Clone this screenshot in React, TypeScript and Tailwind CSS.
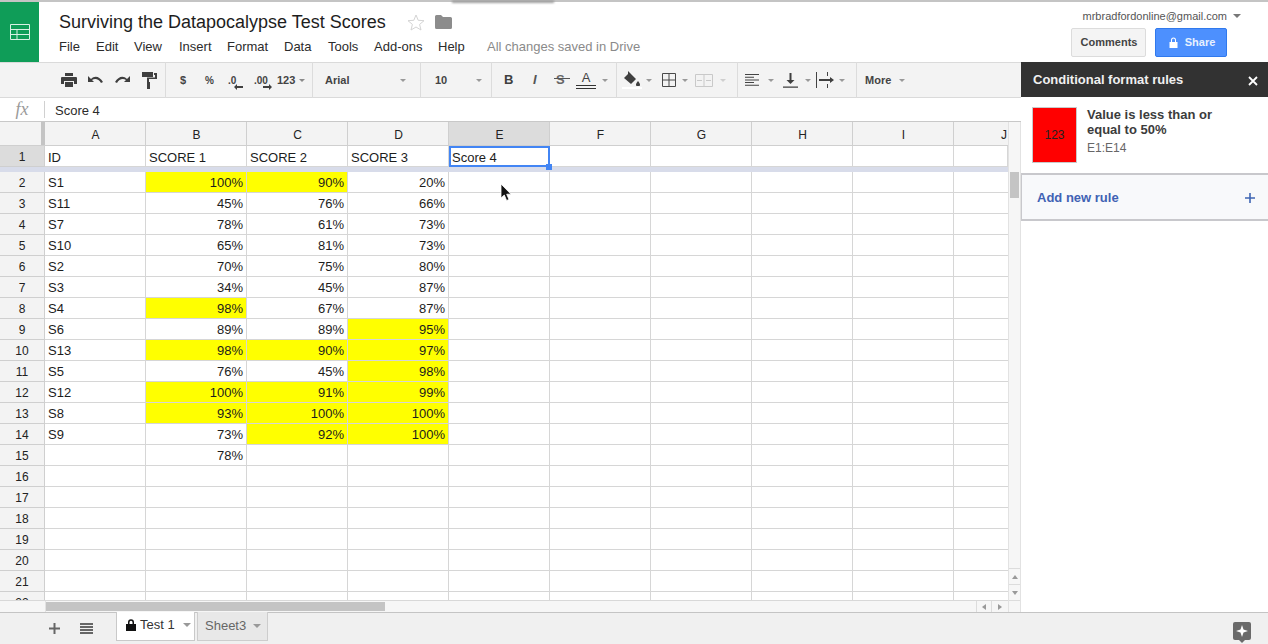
import React from "react";

const cols = ["A", "B", "C", "D", "E", "F", "G", "H", "I", "J"];
type Cell = [string, boolean?];
const rows: [string, Cell, Cell, Cell][] = [
  ["S1", ["100%", true], ["90%", true], ["20%"]],
  ["S11", ["45%"], ["76%"], ["66%"]],
  ["S7", ["78%"], ["61%"], ["73%"]],
  ["S10", ["65%"], ["81%"], ["73%"]],
  ["S2", ["70%"], ["75%"], ["80%"]],
  ["S3", ["34%"], ["45%"], ["87%"]],
  ["S4", ["98%", true], ["67%"], ["87%"]],
  ["S6", ["89%"], ["89%"], ["95%", true]],
  ["S13", ["98%", true], ["90%", true], ["97%", true]],
  ["S5", ["76%"], ["45%"], ["98%", true]],
  ["S12", ["100%", true], ["91%", true], ["99%", true]],
  ["S8", ["93%", true], ["100%", true], ["100%", true]],
  ["S9", ["73%"], ["92%", true], ["100%", true]],
  ["", ["78%"], [""], [""]],
];

function Caret({ c = "#8a8a8a", s = 3 }: { c?: string; s?: number }) {
  return <svg width={s * 2} height={s} viewBox="0 0 6 3" className="shrink-0"><path d="M0 0h6L3 3z" fill={c} /></svg>;
}
function Sep() {
  return <div className="h-[36px] w-px shrink-0 bg-[#dcdcdc]" />;
}

function RowHead({ n, active }: { n: number; active?: boolean }) {
  return (
    <div className={`h-[21px] w-[45px] shrink-0 flex items-center justify-center pt-[2px] border-r border-b border-[#cfcfcf] text-[12px] text-[#222] ${active ? "bg-[#dcdcdc]" : "bg-[#f3f3f3]"}`}>
      {n}
    </div>
  );
}

function DataCell({ v, right, hl, first, w = "w-[101px]" }: { v?: string; right?: boolean; hl?: boolean; first?: boolean; w?: string }) {
  return (
    <div className={`${w} h-full shrink-0 border-r border-b border-[#d6d6d6] px-[3px] flex items-center text-[13px] leading-none text-[#1c1c1c] ${first ? "pt-[2px]" : ""} ${right ? "justify-end" : ""} ${hl ? "bg-[#ffff00]" : "bg-white"}`}>
      {v}
    </div>
  );
}

function EmptyCols() {
  return (
    <>
      <DataCell />
      <DataCell />
      <DataCell />
      <DataCell />
      <DataCell />
      <DataCell />
      <DataCell w="w-[54px]" />
    </>
  );
}

function Toolbar() {
  const g = "#3f3f3f";
  return (
    <div className="h-[36px] shrink-0 flex items-center bg-[#f3f3f3] border-y border-[#dadada] text-[11px] font-bold text-[#444]">
      <div className="w-[165px] shrink-0 flex items-center pl-[61px] gap-[10px]">
        <svg width="16" height="14" viewBox="0 0 16 14"><path d="M4 0h8v3H4zM1 4h14a1 1 0 0 1 1 1v6h-3V8H3v3H0V5a1 1 0 0 1 1-1zM4 9h8v5H4z" fill={g} /></svg>
        <svg width="17" height="9" viewBox="0 0 17 9"><path d="M1 0v6h6L5 4c3-2 7-1 9 3l2-1C13 1 8-1 4 3z" fill={g} /></svg>
        <svg width="17" height="9" viewBox="0 0 17 9"><path d="M16 0v6h-6l2-2C9 2 5 3 3 7L1 6C4 1 9-1 13 3z" fill={g} /></svg>
        <svg width="16" height="17" viewBox="0 0 16 17"><path d="M1 0h11v5H1zM13 1h3v6H8v3H6V5.500h8V3h-1zM6 10h3v7H6z" fill={g} /></svg>
      </div>
      <Sep />
      <div className="w-[146px] shrink-0 flex items-center relative">
        <span className="ml-[14px] w-[25px]">$</span>
        <span className="w-[23px] text-[10px]">%</span>
        <span className="w-[26px] relative text-[10px]">.0<svg className="absolute left-[6px] top-[11px]" width="9" height="6" viewBox="0 0 9 6"><path d="M0 3l3-3v2h6v2H3v2z" fill={g} /></svg></span>
        <span className="w-[23px] relative text-[10px]">.00<svg className="absolute left-[9px] top-[11px]" width="9" height="6" viewBox="0 0 9 6"><path d="M9 3L6 0v2H0v2h6v2z" fill={g} /></svg></span>
        <span className="text-[11px] mr-[4px]">123</span>
        <Caret />
      </div>
      <Sep />
      <div className="w-[107px] shrink-0 flex items-center pl-[12px]">
        <span className="w-[75px]">Arial</span>
        <Caret c="#999" />
      </div>
      <Sep />
      <div className="w-[70px] shrink-0 flex items-center pl-[14px]">
        <span className="w-[41px]">10</span>
        <Caret c="#999" />
      </div>
      <Sep />
      <div className="w-[124px] shrink-0 flex items-center pl-[12px]">
        <span className="w-[29px] text-[13px] text-[#3f3f3f]">B</span>
        <span className="w-[23px] text-[13px] italic text-[#555]">I</span>
        <span className="w-[14px] text-[13px] relative text-[#666]">
          S
          <span className="absolute left-[-2px] right-[0px] top-[8px] h-px bg-[#555]" />
        </span>
        <span className="w-[32px] flex flex-col items-center">
          <span className="text-[13px] font-normal leading-[14px] text-[#444]">A</span>
          <span className="h-[4px] w-[20px] border-y border-[#333]" />
        </span>
        <Caret c="#999" />
      </div>
      <Sep />
      <div className="w-[120px] shrink-0 flex items-center pl-[5px]">
        <span className="flex flex-col items-center w-[20px] mr-[4px]">
          <svg width="18" height="15" viewBox="0 0 18 15"><path d="M5 0l2 2 6 6-5 5-7-6 4-4zM15 10c1.500 2 2 3 2 3.500a1.800 1.800 0 0 1-4 0c0-.5.500-1.500 2-3.500z" fill="#3f3f3f" /></svg>
          <span className="mt-[1px] h-[2px] w-[20px] bg-white" />
        </span>
        <Caret c="#999" />
        <svg className="ml-[10px] mr-[6px]" width="14" height="14" viewBox="0 0 14 14"><path d="M.5.500h13v13H.5zM7 .5v13M.5 7h13" fill="none" stroke="#4a4a4a" /></svg>
        <Caret c="#999" />
        <svg className="ml-[7px] mr-[7px]" width="18" height="13" viewBox="0 0 18 13"><path d="M.5.500h17v12H.5zM9 .5v12" fill="none" stroke="#c9c9c9" /><path d="M2 6.500h5M11 6.500h5" stroke="#c9c9c9" /></svg>
        <Caret c="#cfcfcf" />
      </div>
      <Sep />
      <div className="w-[118px] shrink-0 flex items-center pl-[7px]">
        <svg className="mr-[9px]" width="14" height="12" viewBox="0 0 14 12"><path d="M0 0h14v1H0zM0 2.700h9v1H0zM0 5.400h14v1H0zM0 8h9v1H0zM0 10.700h14v1H0z" fill="#444" /></svg>
        <Caret c="#999" />
        <svg className="ml-[9px] mr-[7px]" width="15" height="15" viewBox="0 0 15 15"><path d="M6.500 0h2v7h3L7.500 11l-4-4h3zM0 13.500h15v1.200H0z" fill="#3f3f3f" /></svg>
        <Caret c="#999" />
        <svg className="ml-[5px] mr-[4px]" width="19" height="16" viewBox="0 0 19 16"><path d="M.5 0v16M11.500 0v4M11.500 12v4" stroke="#444" fill="none" /><path d="M3 7h11V5l4 3-4 3V9H3z" fill="#3f3f3f" /></svg>
        <Caret c="#999" />
      </div>
      <Sep />
      <div className="flex items-center pl-[8px]">
        <span className="mr-[8px]">More</span>
        <Caret c="#999" />
      </div>
    </div>
  );
}

export default function App() {
  return (
    <div className="relative w-[1268px] h-[644px] overflow-hidden flex flex-col bg-white" style={{ fontFamily: "'Liberation Sans', Arial, sans-serif" }}>
      {/* Header */}
      <header className="h-[62px] shrink-0 flex border-t-2 border-[#c4c4c4] bg-white">
        <div className="w-[39px] shrink-0 bg-[#0f9d58] flex items-center justify-center">
          <svg width="20" height="16" viewBox="0 0 20 16"><path d="M.5.500h19v15H.5zM.5 5.500h19M.5 10.500h19M7 5.500v10" fill="none" stroke="#d9f2e4" strokeWidth="1" /></svg>
        </div>
        <div className="flex-1 pl-[20px] pt-[9px]">
          <div className="flex items-center h-[22px]">
            <span className="text-[18px] leading-none text-[#1d1d1d]">Surviving the Datapocalypse Test Scores</span>
            <svg className="ml-[21px]" width="18" height="17" viewBox="0 0 18 17"><path d="M9 1l2.200 5.300 5.800.4-4.400 3.700 1.400 5.600L9 13l-5 3 1.400-5.600L1 6.700l5.800-.4z" fill="none" stroke="#d4d4d4" /></svg>
            <svg className="ml-[10px]" width="17" height="14" viewBox="0 0 17 14"><path d="M0 1.500A1.500 1.500 0 0 1 1.500 0H6l2 2h7.500A1.500 1.500 0 0 1 17 3.500v9a1.500 1.500 0 0 1-1.500 1.500h-14A1.500 1.500 0 0 1 0 12.500z" fill="#8c8c8c" /></svg>
          </div>
          <div className="flex items-center mt-[4px] text-[13px] leading-[20px] text-[#2b2b2b]">
            <span className="w-[37px]">File</span>
            <span className="w-[38px]">Edit</span>
            <span className="w-[45px]">View</span>
            <span className="w-[48px]">Insert</span>
            <span className="w-[57px]">Format</span>
            <span className="w-[44px]">Data</span>
            <span className="w-[46px]">Tools</span>
            <span className="w-[64px]">Add-ons</span>
            <span className="w-[49px]">Help</span>
            <span className="text-[#8a8a8a]">All changes saved in Drive</span>
          </div>
        </div>
        <div className="w-[205px] shrink-0 flex flex-col">
          <div className="h-[12px] mt-[8px] flex items-center justify-end pr-[27px] text-[11px] text-[#555]">
            <span className="mr-[6px]">mrbradfordonline@gmail.com</span>
            <Caret c="#777" s={4} />
          </div>
          <div className="flex mt-[6px] ml-[8px] gap-[9px]">
            <div className="w-[75px] h-[29px] rounded-[2px] border border-[#dcdcdc] bg-[#f4f4f4] flex items-center justify-center pl-[1px] text-[11px] font-bold text-[#444]">Comments</div>
            <div className="w-[72px] h-[29px] rounded-[2px] border border-[#3079ed] bg-[#4d90fe] flex items-center justify-center pl-[2px] text-[11px] font-bold text-[#e8f0fe] gap-[7px]">
              <svg width="9" height="11" viewBox="0 0 9 11"><path d="M2 5V3a2.500 2.500 0 0 1 5 0v2h1.500v6H.5V5zM3 5h3V3a1.500 1.500 0 0 0-3 0z" fill="#fff" fillRule="evenodd" /></svg>
              <span>Share</span>
            </div>
          </div>
        </div>
      </header>

      <div className="flex-1 min-h-0 flex">
        {/* Left sheet area */}
        <div className="w-[1021px] shrink-0 flex flex-col min-h-0">
          <Toolbar />
          {/* Formula bar */}
          <div className="h-[24px] shrink-0 flex items-center bg-white border-b border-[#c8c8c8]">
            <div className="w-[44px] shrink-0 flex justify-center text-[18px] italic text-[#9a9a9a]" style={{ fontFamily: "'Liberation Serif', serif" }}>fx</div>
            <div className="h-[17px] w-px bg-[#d0d0d0]" />
            <div className="pl-[10px] pt-[2px] text-[13px] text-[#2b2b2b]">Score 4</div>
          </div>
          {/* Grid + scrollbar */}
          <div className="flex-1 min-h-0 flex">
            <div className="w-[1008px] shrink-0 flex flex-col min-h-0 overflow-hidden">
              {/* Column headers */}
              <div className="h-[24px] shrink-0 flex border-b border-[#cfcfcf] bg-[#f3f3f3]">
                <div className="w-[45px] shrink-0 border-r-[4px] border-[#c4c4c4]" />
                {cols.map((c) => (
                  <div
                    key={c}
                    className={`${c === "J" ? "w-[54px] justify-end pr-[1px]" : "w-[101px] justify-center pl-[1px] border-r border-[#cfcfcf]"} pt-[2px] shrink-0 flex items-center text-[12px] text-[#222] ${c === "E" ? "bg-[#dcdcdc]" : ""}`}
                  >
                    {c}
                  </div>
                ))}
              </div>
              {/* Row 1 */}
              <div className="h-[21px] shrink-0 flex">
                <RowHead n={1} active />
                <DataCell v="ID" first />
                <DataCell v="SCORE 1" first />
                <DataCell v="SCORE 2" first />
                <DataCell v="SCORE 3" first />
                <div className="w-[101px] h-full shrink-0 border-2 border-[#4285f4] pl-[1px] pt-[2px] flex items-center text-[13px] leading-none text-[#1c1c1c] bg-white relative">
                  Score 4
                  <span className="absolute right-[-4px] bottom-[-5px] w-[6px] h-[6px] bg-[#4285f4] z-10" />
                </div>
                <DataCell />
                <DataCell />
                <DataCell />
                <DataCell />
                <DataCell w="w-[54px]" />
              </div>
              {/* Freeze bar */}
              <div className="h-[5px] shrink-0 bg-[#d8dcea]" />
              {/* Rows */}
              <div className="flex-1 min-h-0 overflow-hidden">
                {rows.map((r, i) => (
                  <div key={i} className="h-[21px] flex">
                    <RowHead n={i + 2} />
                    <DataCell v={r[0]} />
                    <DataCell v={r[1][0]} right hl={r[1][1]} />
                    <DataCell v={r[2][0]} right hl={r[2][1]} />
                    <DataCell v={r[3][0]} right hl={r[3][1]} />
                    <EmptyCols />
                  </div>
                ))}
                {[16, 17, 18, 19, 20, 21, 22].map((n) => (
                  <div key={n} className="h-[21px] flex">
                    <RowHead n={n} />
                    <DataCell />
                    <DataCell />
                    <DataCell />
                    <DataCell />
                    <EmptyCols />
                  </div>
                ))}
              </div>
              {/* Horizontal scrollbar */}
              <div className="h-[12px] shrink-0 flex border-t border-[#d8d8d8] bg-[#f6f6f6]">
                <div className="w-[46px] shrink-0 border-r border-[#e2e2e2]" />
                <div className="w-[339px] shrink-0 h-[9px] mt-[1px] bg-[#c4c4c4]" />
                <div className="flex-1" />
                <div className="w-[16px] shrink-0 border-x border-[#dcdcdc] flex items-center justify-center">
                  <svg width="4" height="6" viewBox="0 0 4 6"><path d="M4 0v6L0 3z" fill="#999" /></svg>
                </div>
                <div className="w-[16px] shrink-0 flex items-center justify-center">
                  <svg width="4" height="6" viewBox="0 0 4 6"><path d="M0 0v6l4-3z" fill="#999" /></svg>
                </div>
              </div>
            </div>
            {/* Vertical scrollbar */}
            <div className="w-[13px] shrink-0 flex flex-col bg-[#f6f6f6] border-l border-r border-[#e2e2e2]">
              <div className="h-[50px] shrink-0" />
              <div className="h-[26px] shrink-0 mx-[1px] bg-[#c4c4c4]" />
              <div className="flex-1" />
              <div className="h-[16px] shrink-0 border-t border-[#dcdcdc] flex items-center justify-center">
                <svg width="6" height="4" viewBox="0 0 6 4"><path d="M0 4h6L3 0z" fill="#999" /></svg>
              </div>
              <div className="h-[16px] shrink-0 border-t border-[#dcdcdc] flex items-center justify-center">
                <svg width="6" height="4" viewBox="0 0 6 4"><path d="M0 0h6L3 4z" fill="#999" /></svg>
              </div>
              <div className="h-[12px] shrink-0 border-t border-[#dcdcdc]" />
            </div>
          </div>
        </div>

        {/* Right panel */}
        <aside className="flex-1 flex flex-col bg-white">
          <div className="h-[35px] shrink-0 bg-[#323232] flex items-center justify-between pl-[12px] pr-[10px]">
            <span className="text-[13px] font-bold text-[#f0f0f0]">Conditional format rules</span>
            <svg className="mt-[2px]" width="10" height="10" viewBox="0 0 10 10"><path d="M1 1l8 8M9 1l-8 8" stroke="#fff" strokeWidth="1.800" /></svg>
          </div>
          <div className="h-[76px] shrink-0 flex pl-[11px] pt-[10px]">
            <div className="w-[45px] h-[56px] shrink-0 bg-[#ff0000] border border-[#c9c9c9] flex items-center justify-center text-[12px] text-[#222]">123</div>
            <div className="ml-[10px]">
              <div className="text-[13px] font-bold leading-[15px] text-[#3c3c3c]">Value is less than or<br />equal to 50%</div>
              <div className="mt-[4px] text-[12px] text-[#666] leading-[15px]">E1:E14</div>
            </div>
          </div>
          <div className="h-[48px] shrink-0 flex items-center justify-between bg-[#f8f9fb] border-y-2 border-l border-[#c8c8cc] pt-[2px] pl-[15px] pr-[13px]">
            <span className="text-[13px] font-bold text-[#4162b4]">Add new rule</span>
            <svg width="10" height="10" viewBox="0 0 10 10"><path d="M5 0v10M0 5h10" stroke="#3f66b4" strokeWidth="1.600" /></svg>
          </div>
          <div className="flex-1" />
        </aside>
      </div>

      {/* Bottom bar */}
      <footer className="h-[32px] shrink-0 flex items-start bg-[#f0f0f0] border-t border-[#c4c4c4]">
        <div className="ml-[49px] mt-[10px] w-[67px] flex items-center shrink-0">
          <svg width="11" height="11" viewBox="0 0 11 11"><path d="M5.500 0v11M0 5.500h11" stroke="#666" strokeWidth="2" /></svg>
          <svg className="ml-[20px]" width="13" height="11" viewBox="0 0 13 11"><path d="M0 0h13v2H0zM0 3h13v2H0zM0 6h13v2H0zM0 9h13v2H0z" fill="#666" /></svg>
        </div>
        <div className="h-[29px] w-[79px] shrink-0 mt-[-1px] pb-[2px] bg-white border-b border-x border-[#c9c9c9] flex items-center pl-[9px] text-[13px] text-[#333]">
          <svg width="10" height="12" viewBox="0 0 10 12"><path d="M2 5V3.200a3 3 0 0 1 6 0V5h2v7H0V5zM3.500 5h3V3.200a1.500 1.500 0 0 0-3 0z" fill="#111" fillRule="evenodd" /></svg>
          <span className="ml-[4px] mr-[8px]">Test 1</span>
          <Caret c="#999" s={4} />
        </div>
        <div className="h-[29px] w-[71px] ml-[2px] shrink-0 mt-[-1px] bg-[#e8e8e8] border border-t-0 border-[#cdcdcd] flex items-center pl-[7px] text-[13px] text-[#666]">
          <span className="mr-[7px]">Sheet3</span>
          <Caret c="#999" s={4} />
        </div>
        <div className="flex-1" />
        <div className="relative mr-[17px] mt-[9px] w-[18px] h-[18px] rounded-[2px] bg-[#6a6a6a] flex items-center justify-center">
          <svg width="12" height="12" viewBox="0 0 12 12"><path d="M6 0l1.500 4.500L12 6 7.500 7.500 6 12 4.500 7.500 0 6l4.500-1.500z" fill="#fff" /></svg>
          <svg className="absolute left-[6px] top-[18px]" width="6" height="3" viewBox="0 0 6 3"><path d="M0 0h6L3 3z" fill="#6a6a6a" /></svg>
        </div>
      </footer>

      {/* Window shadow at the top edge */}
      <div className="absolute left-[452px] top-0 w-[102px] h-[3px] bg-[#a0a0a0] blur-[1px]" />

      {/* Mouse pointer */}
      <svg className="absolute left-[500px] top-[184px]" width="12" height="18" viewBox="0 0 12 18">
        <path d="M1 0v14l3.300-3 2.300 5.500 2.400-1-2.300-5.300H11z" fill="#111" stroke="#fff" strokeWidth="0.800" />
      </svg>
    </div>
  );
}
